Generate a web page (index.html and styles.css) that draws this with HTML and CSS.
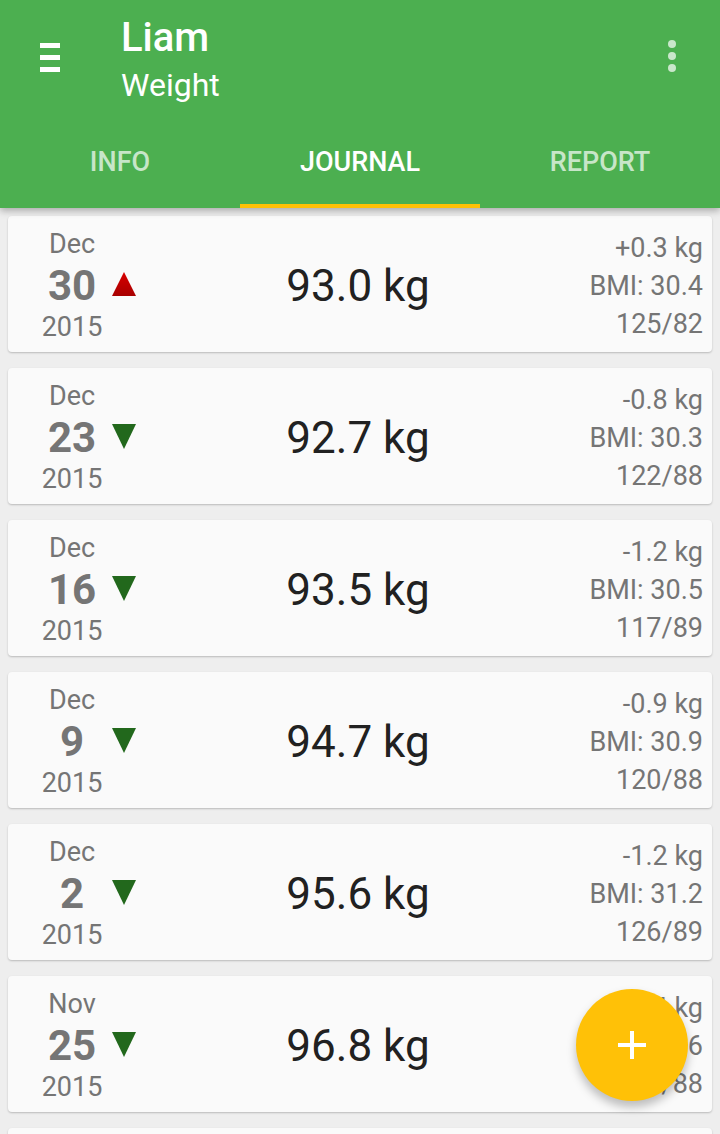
FILE: index.html
```html
<!DOCTYPE html>
<html lang="en">
<head>
    <meta charset="UTF-8">
    <meta name="viewport" content="width=device-width, initial-scale=1.0">
    <title>Liam - Weight</title>
    <link rel="stylesheet" href="styles.css">
</head>
<body>
<div class="screen">

    <div class="appbar">
        <div class="toolbar">
            <div class="menu-icon">
                <span></span><span></span><span></span>
            </div>
            <div class="title">
                <h1>Liam</h1>
                <p>Weight</p>
            </div>
            <div class="overflow-icon">
                <span></span><span></span><span></span>
            </div>
        </div>
        <div class="tabs">
            <div class="tab">INFO</div>
            <div class="tab active">JOURNAL</div>
            <div class="tab">REPORT</div>
        </div>
    </div>

    <div class="list">

        <div class="card">
            <div class="left">
                <div class="date">
                    <div class="month">Dec</div>
                    <div class="day">30</div>
                    <div class="year">2015</div>
                </div>
                <svg class="trend" width="24" height="25" viewBox="0 0 24 25">
                    <defs>
                        <linearGradient id="red" x1="0" y1="0" x2="0" y2="1">
                            <stop offset="0" stop-color="#d80000"/>
                            <stop offset="1" stop-color="#a80000"/>
                        </linearGradient>
                    </defs>
                    <polygon points="12,0 24,24 0,24" fill="url(#red)"/>
                </svg>
            </div>
            <div class="weight">93.0 kg</div>
            <div class="stats">
                <div>+0.3 kg</div>
                <div>BMI: 30.4</div>
                <div>125/82</div>
            </div>
        </div>

        <div class="card">
            <div class="left">
                <div class="date">
                    <div class="month">Dec</div>
                    <div class="day">23</div>
                    <div class="year">2015</div>
                </div>
                <svg class="trend" width="24" height="25" viewBox="0 0 24 25"><polygon points="0,0 24,0 12,25" fill="#22681c"/></svg>
            </div>
            <div class="weight">92.7 kg</div>
            <div class="stats">
                <div>-0.8 kg</div>
                <div>BMI: 30.3</div>
                <div>122/88</div>
            </div>
        </div>

        <div class="card">
            <div class="left">
                <div class="date">
                    <div class="month">Dec</div>
                    <div class="day">16</div>
                    <div class="year">2015</div>
                </div>
                <svg class="trend" width="24" height="25" viewBox="0 0 24 25"><polygon points="0,0 24,0 12,25" fill="#22681c"/></svg>
            </div>
            <div class="weight">93.5 kg</div>
            <div class="stats">
                <div>-1.2 kg</div>
                <div>BMI: 30.5</div>
                <div>117/89</div>
            </div>
        </div>

        <div class="card">
            <div class="left">
                <div class="date">
                    <div class="month">Dec</div>
                    <div class="day">9</div>
                    <div class="year">2015</div>
                </div>
                <svg class="trend" width="24" height="25" viewBox="0 0 24 25"><polygon points="0,0 24,0 12,25" fill="#22681c"/></svg>
            </div>
            <div class="weight">94.7 kg</div>
            <div class="stats">
                <div>-0.9 kg</div>
                <div>BMI: 30.9</div>
                <div>120/88</div>
            </div>
        </div>

        <div class="card">
            <div class="left">
                <div class="date">
                    <div class="month">Dec</div>
                    <div class="day">2</div>
                    <div class="year">2015</div>
                </div>
                <svg class="trend" width="24" height="25" viewBox="0 0 24 25"><polygon points="0,0 24,0 12,25" fill="#22681c"/></svg>
            </div>
            <div class="weight">95.6 kg</div>
            <div class="stats">
                <div>-1.2 kg</div>
                <div>BMI: 31.2</div>
                <div>126/89</div>
            </div>
        </div>

        <div class="card">
            <div class="left">
                <div class="date">
                    <div class="month">Nov</div>
                    <div class="day">25</div>
                    <div class="year">2015</div>
                </div>
                <svg class="trend" width="24" height="25" viewBox="0 0 24 25"><polygon points="0,0 24,0 12,25" fill="#22681c"/></svg>
            </div>
            <div class="weight">96.8 kg</div>
            <div class="stats">
                <div>-0.4 kg</div>
                <div>BMI: 31.6</div>
                <div>124/88</div>
            </div>
        </div>

        <!-- next entry, scrolled below the fold -->
        <div class="card"></div>

    </div>

    <div class="fab">
        <svg width="28" height="28" viewBox="0 0 28 28">
            <rect x="0" y="12" width="28" height="4" fill="#fff"/>
            <rect x="12" y="0" width="4" height="28" fill="#fff"/>
        </svg>
    </div>

</div>
</body>
</html>
```

FILE: styles.css
```css
* {
    margin: 0px;
    padding: 0px;
    box-sizing: border-box;
}

html, body {
    background-color: #eeeeee;
    font-family: Roboto, "Liberation Sans", sans-serif;
}

.screen {
    position: relative;
    width: 720px;
    height: 1134px;
    overflow: hidden;
}

/* app bar */

.appbar {
    position: relative;
    z-index: 2;
    background-color: #4caf50;
    color: #ffffff;
    box-shadow: 0 3px 7px rgba(0, 0, 0, 0.28);
}

.toolbar {
    height: 112px;
    display: flex;
    align-items: flex-start;
}

.menu-icon {
    width: 20px;
    margin: 43px 0 0 40px;
    display: flex;
    flex-direction: column;
    gap: 7px;
}

.menu-icon span {
    display: block;
    height: 5px;
    background-color: #ffffff;
}

.title {
    margin-left: 61px;
    padding-top: 16px;
    flex: 1;
}

.title h1 {
    font-size: 40px;
    font-weight: 500;
    line-height: 44px;
}

.title p {
    font-size: 32px;
    line-height: 50px;
}

.overflow-icon {
    margin: 40px 44px 0 0;
    display: flex;
    flex-direction: column;
    gap: 4px;
}

.overflow-icon span {
    display: block;
    width: 8px;
    height: 8px;
    border-radius: 50%;
    background-color: rgba(255, 255, 255, 0.7);
}

.tabs {
    height: 96px;
    display: grid;
    grid-template-columns: 1fr 1fr 1fr;
}

.tab {
    display: flex;
    align-items: center;
    justify-content: center;
    font-size: 27px;
    font-weight: 500;
    color: rgba(255, 255, 255, 0.7);
    border-bottom: 4px solid transparent;
    padding-top: 8px;
}

.tab.active {
    color: #ffffff;
    border-bottom-color: #ffc107;
}

/* journal list */

.list {
    padding: 8px;
    display: flex;
    flex-direction: column;
    gap: 16px;
}

.card {
    height: 136px;
    flex-shrink: 0;
    background-color: #fafafa;
    border-radius: 4px;
    box-shadow: 0 1px 2px rgba(0, 0, 0, 0.22);
    display: grid;
    grid-template-columns: 1fr auto 1fr;
    align-items: center;
}

.left {
    display: flex;
    align-items: center;
    padding-left: 24px;
}

.date {
    width: 80px;
    text-align: center;
    color: #757575;
    padding-top: 2px;
}

.month {
    font-size: 27px;
    line-height: 32px;
}

.day {
    font-size: 42px;
    font-weight: 700;
    line-height: 52px;
}

.year {
    font-size: 27px;
    line-height: 30px;
}

.trend {
    display: block;
}

.weight {
    font-size: 44px;
    line-height: 44px;
    color: #212121;
    padding: 4px 4px 0 0;
}

.stats {
    text-align: right;
    padding: 3px 9px 0 0;
    font-size: 27px;
    line-height: 38px;
    color: #757575;
}

/* floating action button */

.fab {
    position: absolute;
    right: 32px;
    bottom: 33px;
    width: 112px;
    height: 112px;
    border-radius: 50%;
    background-color: #ffc107;
    box-shadow: 0 6px 10px rgba(0, 0, 0, 0.25);
    display: flex;
    align-items: center;
    justify-content: center;
    z-index: 3;
}

.fab svg {
    display: block;
}
```
